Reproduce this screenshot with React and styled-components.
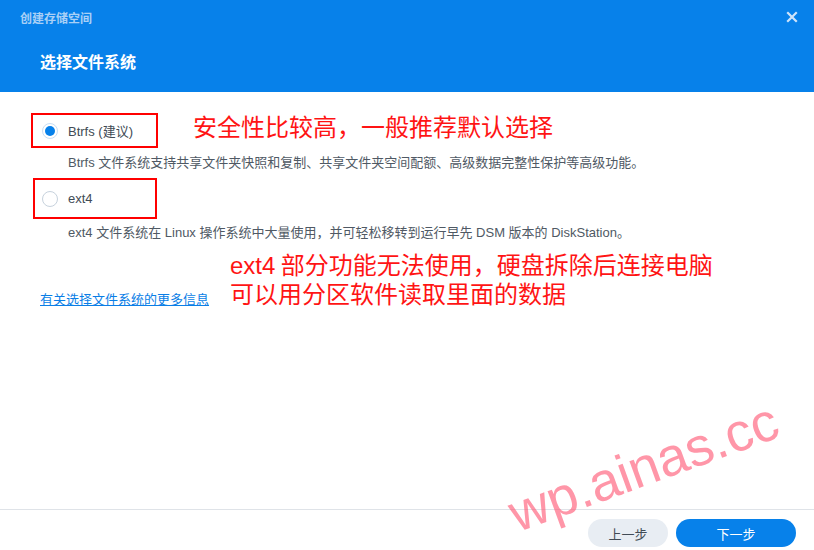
import React from "react";
import styled, { createGlobalStyle } from "styled-components";

const GlobalStyle = createGlobalStyle`
  html, body {
    margin: 0;
    padding: 0;
    background: #ffffff;
  }
  body {
    font-family: "Liberation Sans", "Noto Sans CJK SC", sans-serif;
  }
`;

const Dialog = styled.div`
  position: relative;
  width: 814px;
  height: 550px;
  display: flex;
  flex-direction: column;
  overflow: hidden;
  background: #fff;
`;

const Header = styled.div`
  height: 92px;
  background: #0781ea;
  display: flex;
  flex-direction: column;
  flex-shrink: 0;
`;

const TitleBar = styled.div`
  height: 34px;
  display: flex;
  align-items: center;
  justify-content: space-between;
  padding: 0 16px 0 20px;
`;

const WindowTitle = styled.span`
  font-family: "Noto Sans CJK SC", sans-serif;
  font-size: 12px;
  font-weight: 700;
  color: #a9d0f6;
`;

const CloseBtn = styled.button`
  border: 0;
  background: none;
  padding: 0;
  width: 12px;
  height: 12px;
  display: flex;
  cursor: pointer;
`;

const StepTitle = styled.h1`
  margin: 0;
  padding: 0 0 0 40px;
  height: 54px;
  line-height: 54px;
  font-family: "Noto Sans CJK SC", sans-serif;
  font-size: 16px;
  font-weight: 700;
  color: #ffffff;
`;

const Body = styled.div`
  flex: 1;
  padding: 21px 0 0 0;
  display: flex;
  flex-direction: column;
`;

const OptionRow = styled.div`
  display: flex;
  align-items: flex-start;
  margin-top: ${(p) => p.$mt || 0}px;
`;

const Option = styled.label`
  box-sizing: border-box;
  display: flex;
  align-items: center;
  gap: 10px;
  margin-left: ${(p) => p.$left}px;
  width: ${(p) => p.$w}px;
  height: ${(p) => p.$h}px;
  padding-left: ${(p) => 50 - 8 - p.$left}px;
  border: 2px solid #ff0000;
  font-size: 13px;
  color: #414b55;
  cursor: pointer;
`;

const Radio = styled.span`
  box-sizing: border-box;
  width: 16px;
  height: 16px;
  border-radius: 50%;
  border: 1px solid ${(p) => (p.$checked ? "#c9def3" : "#c7d2dd")};
  display: flex;
  align-items: center;
  justify-content: center;
  background: #fff;
  margin-left: -2px;
  &::after {
    content: "";
    width: 10px;
    height: 10px;
    border-radius: 50%;
    background: ${(p) => (p.$checked ? "#0781ea" : "transparent")};
  }
`;

const Note = styled.div`
  font-family: "Noto Sans CJK SC", sans-serif;
  font-size: 24px;
  line-height: 27px;
  color: #ff1414;
  margin-left: ${(p) => p.$left}px;
  margin-top: ${(p) => p.$mt || 0}px;
`;

const NoteLine = styled.div`
  white-space: nowrap;
`;

const NoteLatin = styled.span`
  font-family: "Liberation Sans", sans-serif;
`;

const Desc = styled.p`
  margin: ${(p) => p.$mt}px 0 0 68px;
  font-size: 13px;
  line-height: 20px;
  color: #4f5964;
`;

const InfoRow = styled.div`
  display: flex;
  align-items: flex-start;
  margin-top: 7px;
`;

const MoreLink = styled.a`
  margin: 40px 0 0 40px;
  font-size: 13px;
  line-height: 20px;
  color: #0a7ee6;
  text-decoration: underline;
  cursor: pointer;
`;

const Footer = styled.div`
  box-sizing: border-box;
  height: 41px;
  border-top: 1px solid #dfe3e8;
  display: flex;
  justify-content: flex-end;
  align-items: flex-start;
  gap: 8px;
  padding: 9px 18px 0 0;
  flex-shrink: 0;
`;

const Button = styled.button`
  height: 28px;
  width: ${(p) => p.$w}px;
  border: 0;
  border-radius: 14px;
  font-family: "Noto Sans CJK SC", sans-serif;
  font-size: 13px;
  background: ${(p) => (p.$primary ? "#0781ea" : "#e8edf3")};
  color: ${(p) => (p.$primary ? "#ffffff" : "#414b55")};
  cursor: pointer;
`;

const Watermark = styled.span`
  position: absolute;
  left: 520px;
  top: 486px;
  font-family: "Liberation Sans", sans-serif;
  font-size: 54px;
  line-height: 1;
  white-space: nowrap;
  color: rgba(255, 80, 110, 0.6);
  transform: rotate(-20deg);
  transform-origin: 0 100%;
  pointer-events: none;
`;

export default function App() {
  return (
    <>
      <GlobalStyle />
      <Dialog>
        <Header>
          <TitleBar>
            <WindowTitle>创建存储空间</WindowTitle>
            <CloseBtn aria-label="关闭">
              <svg width="12" height="12" viewBox="0 0 12 12">
                <path
                  d="M2 2 L10 10 M10 2 L2 10"
                  stroke="#cfe4fa"
                  strokeWidth="2.2"
                  strokeLinecap="square"
                />
              </svg>
            </CloseBtn>
          </TitleBar>
          <StepTitle>选择文件系统</StepTitle>
        </Header>
        <Body>
          <OptionRow>
            <Option $left={31} $w={127} $h={35}>
              <Radio $checked />
              Btrfs (建议)
            </Option>
            <Note $left={35} $mt={-1}>
              安全性比较高，一般推荐默认选择
            </Note>
          </OptionRow>
          <Desc $mt={5}>
            Btrfs 文件系统支持共享文件夹快照和复制、共享文件夹空间配额、高级数据完整性保护等高级功能。
          </Desc>
          <OptionRow $mt={5}>
            <Option $left={33} $w={124} $h={41}>
              <Radio />
              ext4
            </Option>
          </OptionRow>
          <Desc $mt={4}>
            ext4 文件系统在 Linux 操作系统中大量使用，并可轻松移转到运行早先 DSM 版本的 DiskStation。
          </Desc>
          <InfoRow>
            <MoreLink>有关选择文件系统的更多信息</MoreLink>
            <Note $left={21}>
              <NoteLine>
                <NoteLatin>ext4</NoteLatin> 部分功能无法使用，硬盘拆除后连接电脑
              </NoteLine>
              <NoteLine>可以用分区软件读取里面的数据</NoteLine>
            </Note>
          </InfoRow>
        </Body>
        <Footer>
          <Button $w={80}>上一步</Button>
          <Button $w={120} $primary>
            下一步
          </Button>
        </Footer>
        <Watermark>wp.ainas.cc</Watermark>
      </Dialog>
    </>
  );
}
